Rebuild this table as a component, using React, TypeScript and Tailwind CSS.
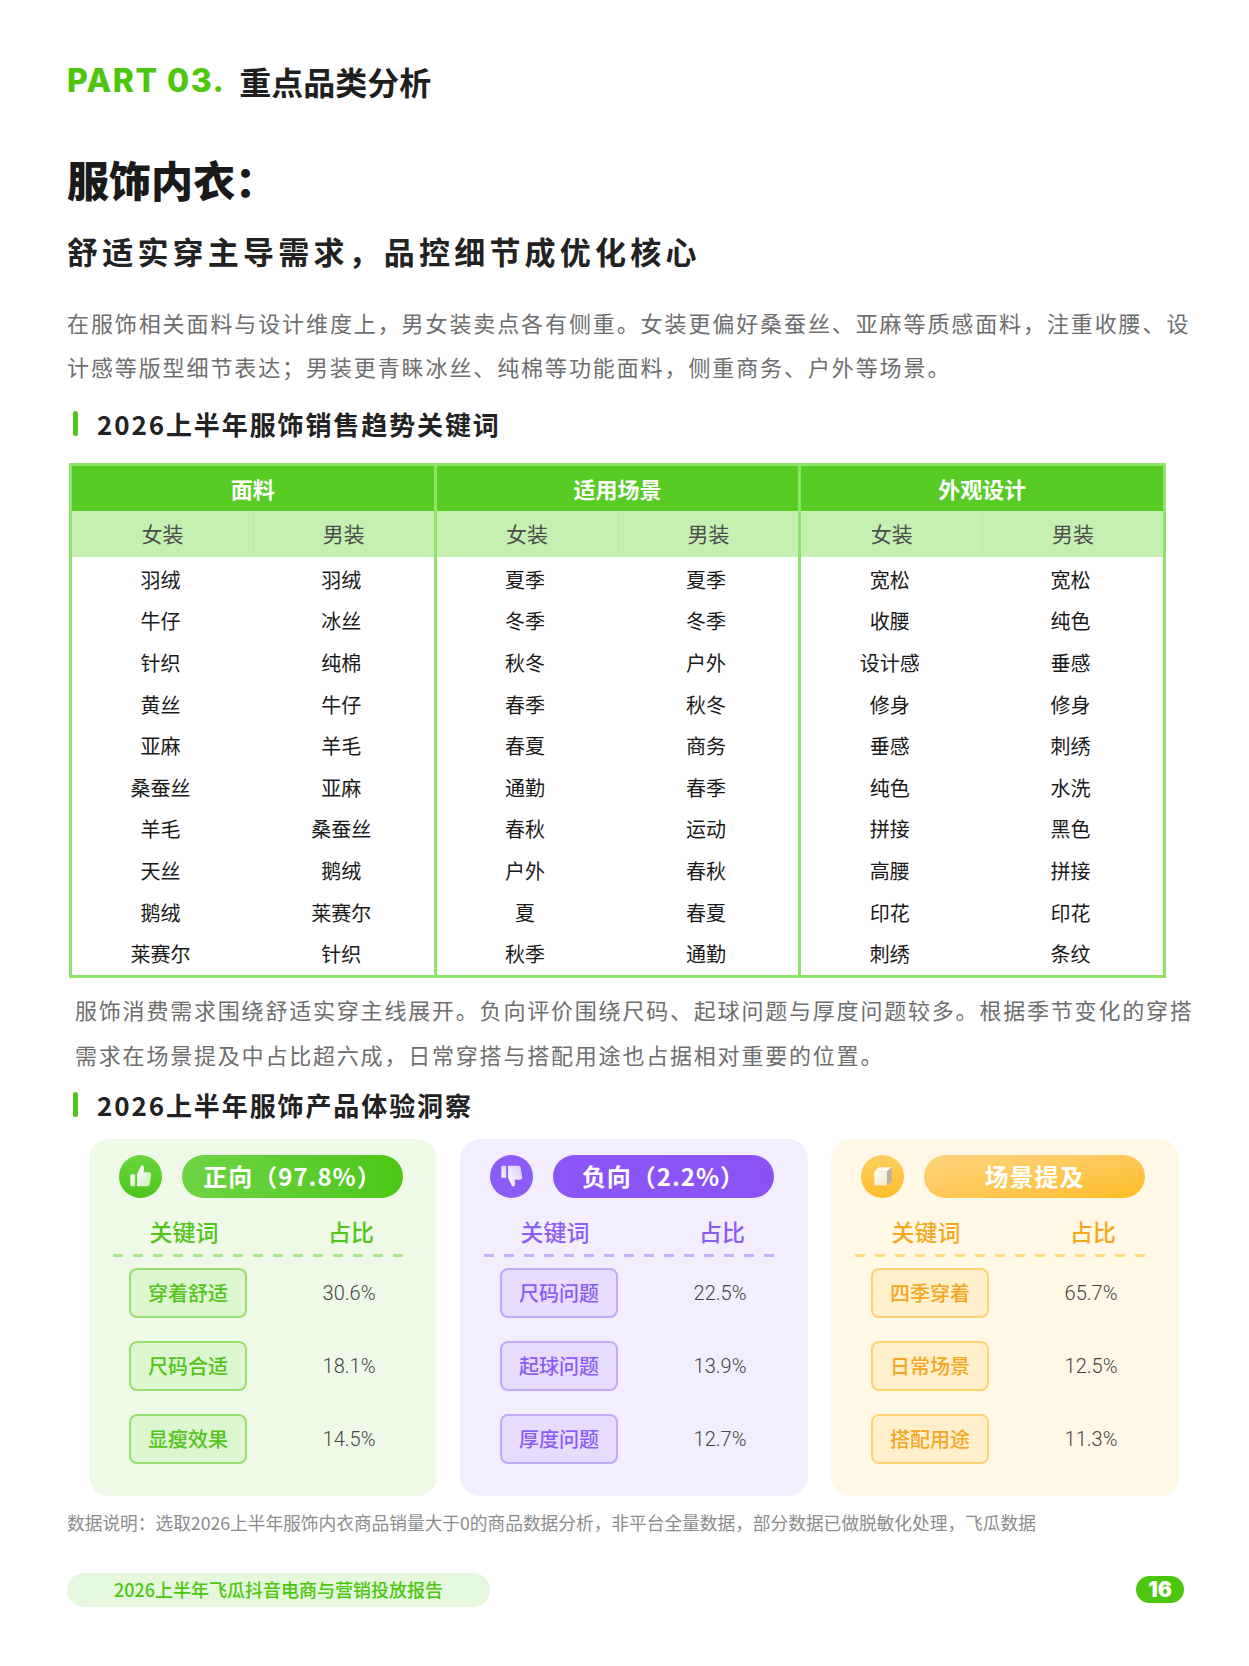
import React from "react"

const groups = [
  {
    title: "面料",
    women: ["羽绒", "牛仔", "针织", "黄丝", "亚麻", "桑蚕丝", "羊毛", "天丝", "鹅绒", "莱赛尔"],
    men: ["羽绒", "冰丝", "纯棉", "牛仔", "羊毛", "亚麻", "桑蚕丝", "鹅绒", "莱赛尔", "针织"],
  },
  {
    title: "适用场景",
    women: ["夏季", "冬季", "秋冬", "春季", "春夏", "通勤", "春秋", "户外", "夏", "秋季"],
    men: ["夏季", "冬季", "户外", "秋冬", "商务", "春季", "运动", "春秋", "春夏", "通勤"],
  },
  {
    title: "外观设计",
    women: ["宽松", "收腰", "设计感", "修身", "垂感", "纯色", "拼接", "高腰", "印花", "刺绣"],
    men: ["宽松", "纯色", "垂感", "修身", "刺绣", "水洗", "黑色", "拼接", "印花", "条纹"],
  },
]

type Theme = {
  card: string
  circle: string
  pill: string
  head: string
  dash: string
  box: string
}

const themes: Record<string, Theme> = {
  green: {
    card: "bg-[#eef9e8]",
    circle: "bg-gradient-to-b from-[#6ad63d] to-[#4cc516]",
    pill: "bg-gradient-to-r from-[#6dd443] to-[#4cc714]",
    head: "text-[#52c41a]",
    dash: "bg-[repeating-linear-gradient(90deg,#a8e58c_0_10px,transparent_10px_20px)]",
    box: "bg-[#ddf6d0] border-[#96e070] text-[#52c41a]",
  },
  purple: {
    card: "bg-[#f2eefe]",
    circle: "bg-[#8b5cf6]",
    pill: "bg-gradient-to-r from-[#8a56f7] to-[#8a52f5]",
    head: "text-[#8b5cf6]",
    dash: "bg-[repeating-linear-gradient(90deg,#c5b0f9_0_10px,transparent_10px_20px)]",
    box: "bg-[#e7dcfd] border-[#c3a9fa] text-[#8a5cf6]",
  },
  orange: {
    card: "bg-[#fff8e7]",
    circle: "bg-gradient-to-b from-[#ffcf5c] to-[#ffbc2a]",
    pill: "bg-gradient-to-br from-[#ffd47c] to-[#ffbd1d]",
    head: "text-[#f5a81c]",
    dash: "bg-[repeating-linear-gradient(90deg,#ffdb80_0_10px,transparent_10px_20px)]",
    box: "bg-[#fff0cb] border-[#ffd470] text-[#f5a623]",
  },
}

function ThumbIcon({ down = false, id }: { down?: boolean; id: string }) {
  return (
    <svg width="34" height="34" viewBox="0 0 24 24">
      <defs>
        <linearGradient id={id} x1="0" y1="0" x2="1" y2="1">
          <stop offset="0" stopColor="#ffffff" />
          <stop offset="1" stopColor={down ? "#d7c8ff" : "#c9efb6"} />
        </linearGradient>
      </defs>
      <g transform={down ? "translate(0,24) scale(1,-1)" : undefined} fill={`url(#${id})`}>
        <rect x="4.5" y="10.8" width="3.4" height="8.4" rx="0.6" />
        <path d="M9.2 10.8 L11.9 5.2 C12.3 4.4 13.7 4.5 14 5.4 C14.3 6.3 14 8 13.8 9.4 L17.6 9.4 C18.7 9.4 19.4 10.3 19.2 11.3 L18.1 17.8 C17.95 18.6 17.3 19.2 16.5 19.2 L9.2 19.2 Z" />
      </g>
    </svg>
  )
}

function CubeIcon() {
  return (
    <svg width="32" height="32" viewBox="0 0 24 24">
      <defs>
        <linearGradient id="cubeFront" x1="0" y1="0" x2="1" y2="1">
          <stop offset="0" stopColor="#ffffff" />
          <stop offset="1" stopColor="#f4e3bd" />
        </linearGradient>
      </defs>
      <polygon points="5.5,8.5 9,5.5 18.5,5.5 15,8.5" fill="#fffbf0" />
      <polygon points="5.5,8.5 15,8.5 15,19 5.5,19" fill="url(#cubeFront)" />
      <polygon points="15,8.5 18.5,5.5 18.5,16 15,19" fill="#b9b2a4" />
    </svg>
  )
}

const cards = [
  {
    theme: themes.green,
    label: "正向（97.8%）",
    icon: <ThumbIcon id="tu" />,
    rows: [
      ["穿着舒适", "30.6%"],
      ["尺码合适", "18.1%"],
      ["显瘦效果", "14.5%"],
    ],
  },
  {
    theme: themes.purple,
    label: "负向（2.2%）",
    icon: <ThumbIcon id="td" down />,
    rows: [
      ["尺码问题", "22.5%"],
      ["起球问题", "13.9%"],
      ["厚度问题", "12.7%"],
    ],
  },
  {
    theme: themes.orange,
    label: "场景提及",
    icon: <CubeIcon />,
    rows: [
      ["四季穿着", "65.7%"],
      ["日常场景", "12.5%"],
      ["搭配用途", "11.3%"],
    ],
  },
]

function SectionHeader({ children }: { children: React.ReactNode }) {
  return (
    <div className="flex items-center h-[34px]">
      <div className="ml-[6px] w-[5px] h-[25px] rounded-full bg-[#52c41a]" />
      <h3 className="ml-[19px] text-[26px] font-bold tracking-[1.9px] text-[#222]">{children}</h3>
    </div>
  )
}

export default function App() {
  return (
    <div className="w-[1249px] h-[1666px] bg-white px-[67px] pt-[61px] font-['Noto_Sans_CJK_SC',sans-serif] text-[#222]">
      {/* Part title */}
      <div className="flex items-center h-[40px]">
        <span className="font-['Inter','Noto_Sans_CJK_SC',sans-serif] font-extrabold text-[32px] tracking-[1.5px] text-[#4cc70d]">
          PART 03.
        </span>
        <span className="ml-[14px] text-[32px] font-bold text-[#1f1f1f]">重点品类分析</span>
      </div>

      <h1 className="mt-[53px] text-[42px] leading-[50px] font-black text-[#1a1a1a]">服饰内衣：</h1>
      <h2 className="mt-[27px] text-[31px] leading-[40px] font-bold tracking-[4.2px] text-[#222]">
        舒适实穿主导需求，品控细节成优化核心
      </h2>

      <p className="mt-[29px] text-[22px] leading-[44px] tracking-[1.9px] text-[#6e6e6e] whitespace-nowrap">
        在服饰相关面料与设计维度上，男女装卖点各有侧重。女装更偏好桑蚕丝、亚麻等质感面料，注重收腰、设
        <br />
        计感等版型细节表达；男装更青睐冰丝、纯棉等功能面料，侧重商务、户外等场景。
      </p>

      <div className="mt-[18px]">
        <SectionHeader>2026上半年服饰销售趋势关键词</SectionHeader>
      </div>

      {/* Keyword table */}
      <div className="mt-[23px] ml-[2px] w-[1097px] flex border-[3px] border-[#8ee36a]">
        {groups.map((g, gi) => (
          <div key={g.title} className={`flex-1 flex flex-col ${gi > 0 ? "border-l-[3px] border-[#8ee36a]" : ""}`}>
            <div className="h-[45px] bg-[#58cb25] flex items-center justify-center text-white text-[22px] font-bold">
              {g.title}
            </div>
            <div className="h-[46px] bg-[#c6efb2] grid grid-cols-2 text-[21px] text-[#4d4d4d]">
              <div className="flex items-center justify-center">女装</div>
              <div className="flex items-center justify-center border-l border-[#bfe9a8]">男装</div>
            </div>
            <div className="grid grid-cols-2 pt-[2px] text-[20px] text-[#1a1a1a]">
              {g.women.map((w, i) => (
                <React.Fragment key={i}>
                  <div className="h-[41.6px] pr-[4px] flex items-center justify-center">{w}</div>
                  <div className="h-[41.6px] pr-[4px] flex items-center justify-center">{g.men[i]}</div>
                </React.Fragment>
              ))}
            </div>
          </div>
        ))}
      </div>

      <p className="mt-[9px] ml-[8px] text-[22px] leading-[45px] tracking-[1.8px] text-[#6e6e6e] whitespace-nowrap">
        服饰消费需求围绕舒适实穿主线展开。负向评价围绕尺码、起球问题与厚度问题较多。根据季节变化的穿搭
        <br />
        需求在场景提及中占比超六成，日常穿搭与搭配用途也占据相对重要的位置。
      </p>

      <div className="mt-[11px]">
        <SectionHeader>2026上半年服饰产品体验洞察</SectionHeader>
      </div>

      {/* Insight cards */}
      <div className="mt-[17px] ml-[22px] w-[1090px] grid grid-cols-3 gap-[23px]">
        {cards.map((c) => (
          <div key={c.label} className={`h-[357px] rounded-[20px] pt-[16px] ${c.theme.card}`}>
            <div className="flex items-center pl-[30px]">
              <div className={`w-[43px] h-[43px] rounded-full flex items-center justify-center ${c.theme.circle}`}>
                {c.icon}
              </div>
              <div
                className={`ml-[20px] w-[221px] h-[43px] rounded-full flex items-center justify-center text-white text-[24px] font-bold tracking-[1px] ${c.theme.pill}`}
              >
                {c.label}
              </div>
            </div>
            <div className={`mt-[16px] flex h-[34px] items-center text-[23px] font-medium ${c.theme.head}`}>
              <div className="ml-[36px] w-[118px] text-center">关键词</div>
              <div className="ml-[78px] w-[60px] text-center">占比</div>
            </div>
            <div className={`mt-[6px] ml-[24px] w-[292px] h-[3px] ${c.theme.dash}`} />
            <div className="mt-[11px] flex flex-col gap-[23px]">
              {c.rows.map(([k, v]) => (
                <div key={k} className="flex items-center">
                  <div
                    className={`ml-[40px] w-[118px] h-[50px] rounded-[8px] border-2 flex items-center justify-center text-[20px] font-medium ${c.theme.box}`}
                  >
                    {k}
                  </div>
                  <div className="ml-[62px] w-[80px] text-center font-['Roboto',sans-serif] font-light text-[20px] text-[#444]">
                    {v}
                  </div>
                </div>
              ))}
            </div>
          </div>
        ))}
      </div>

      <p className="mt-[14px] text-[17.7px] leading-[24px] text-[#8c8c8c]">
        数据说明：选取2026上半年服饰内衣商品销量大于0的商品数据分析，非平台全量数据，部分数据已做脱敏化处理，飞瓜数据
      </p>

      {/* Footer */}
      <div className="mt-[39px] flex items-center justify-between">
        <div className="w-[423px] h-[34px] rounded-full bg-[#e5f7dc] flex items-center justify-center text-[18px] font-medium text-[#4cc70d]">
          2026上半年飞瓜抖音电商与营销投放报告
        </div>
        <div className="mr-[-2px] w-[48px] h-[27px] rounded-full bg-[#4cc70d] flex items-center justify-center font-['Inter',sans-serif] text-white text-[21px] font-black">
          16
        </div>
      </div>
    </div>
  )
}
